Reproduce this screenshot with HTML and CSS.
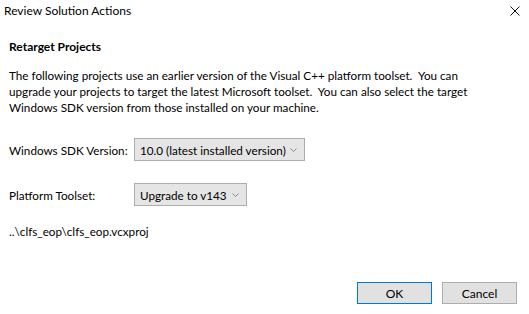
FILE: index.html
```html
<!DOCTYPE html>
<html lang="en">
<head>
    <meta charset="UTF-8">
    <meta name="viewport" content="width=device-width, initial-scale=1.0">
    <title>Review Solution Actions</title>
    <link rel="stylesheet" href="styles.css">
</head>
<body>
    <div class="dialog">
        <div class="titlebar">
            <span class="title">Review Solution Actions</span>
            <span class="close">
                <svg width="10" height="10" viewBox="0 0 10 10"><path d="M0.5 0.5 L9.5 9.5 M9.5 0.5 L0.5 9.5" stroke="#111" stroke-width="1"/></svg>
            </span>
        </div>

        <div class="content">
            <h2>Retarget Projects</h2>
            <p class="intro">The following projects use an earlier version of the Visual C++ platform toolset.&nbsp; You can upgrade your projects to target the latest Microsoft toolset.&nbsp; You can also select the target Windows SDK version from those installed on your machine.</p>

            <div class="form-row first">
                <label>Windows SDK Version:</label>
                <div class="combo sdk">
                    <span>10.0 (latest installed version)</span>
                    <svg class="chevron" width="7" height="4" viewBox="0 0 7 4"><path d="M0.5 0.5 L3.5 3.5 L6.5 0.5" fill="none" stroke="#888" stroke-width="1"/></svg>
                </div>
            </div>

            <div class="form-row">
                <label>Platform Toolset:</label>
                <div class="combo toolset">
                    <span>Upgrade to v143</span>
                    <svg class="chevron" width="7" height="4" viewBox="0 0 7 4"><path d="M0.5 0.5 L3.5 3.5 L6.5 0.5" fill="none" stroke="#888" stroke-width="1"/></svg>
                </div>
            </div>

            <div class="project">..\clfs_eop\clfs_eop.vcxproj</div>
        </div>

        <div class="buttons">
            <button class="default">OK</button>
            <button>Cancel</button>
        </div>
    </div>
</body>
</html>
```

FILE: styles.css
```css
html, body {
    margin: 0;
    padding: 0;
    background: #fff;
}
body {
    font-family: Lato, "Open Sans", sans-serif;
    font-size: 11.7px;
    color: #000;
}
.dialog {
    height: 314px;
    display: flex;
    flex-direction: column;
}
.titlebar {
    height: 22px;
    line-height: 22px;
    padding-left: 4px;
    font-size: 12px;
    display: flex;
    justify-content: space-between;
    align-items: center;
}
.close {
    width: 10px;
    height: 10px;
    margin-right: 9px;
    display: flex;
}
.content {
    padding: 0 9px;
}
h2 {
    font-size: 12px;
    font-weight: bold;
    line-height: 16px;
    margin: 17px 0 0 0;
}
.intro {
    line-height: 16px;
    margin: 12px 0 0 0;
    width: 460px;
}
.form-row {
    display: flex;
    align-items: center;
    margin-top: 22px;
}
.form-row.first {
    margin-top: 23px;
}
label {
    width: 125px;
}
.combo {
    height: 21px;
    box-sizing: content-box;
    border: 1px solid #adadad;
    background: #e5e5e5;
    display: flex;
    align-items: center;
    justify-content: space-between;
    padding: 0 7px 0 5px;
}
.combo.sdk {
    width: 157px;
}
.combo.toolset {
    width: 99px;
}
.chevron {
    display: block;
}
.project {
    line-height: 16px;
    margin-top: 17px;
}
.buttons {
    margin-top: auto;
    display: flex;
    justify-content: flex-end;
    gap: 10px;
    padding: 0 12px 10px 0;
}
button {
    width: 75px;
    height: 22px;
    font-family: inherit;
    font-size: 12px;
    color: #000;
    background: #e1e1e1;
    border: 1px solid #adadad;
    padding: 0;
}
button.default {
    border-color: #0078d7;
}
```
